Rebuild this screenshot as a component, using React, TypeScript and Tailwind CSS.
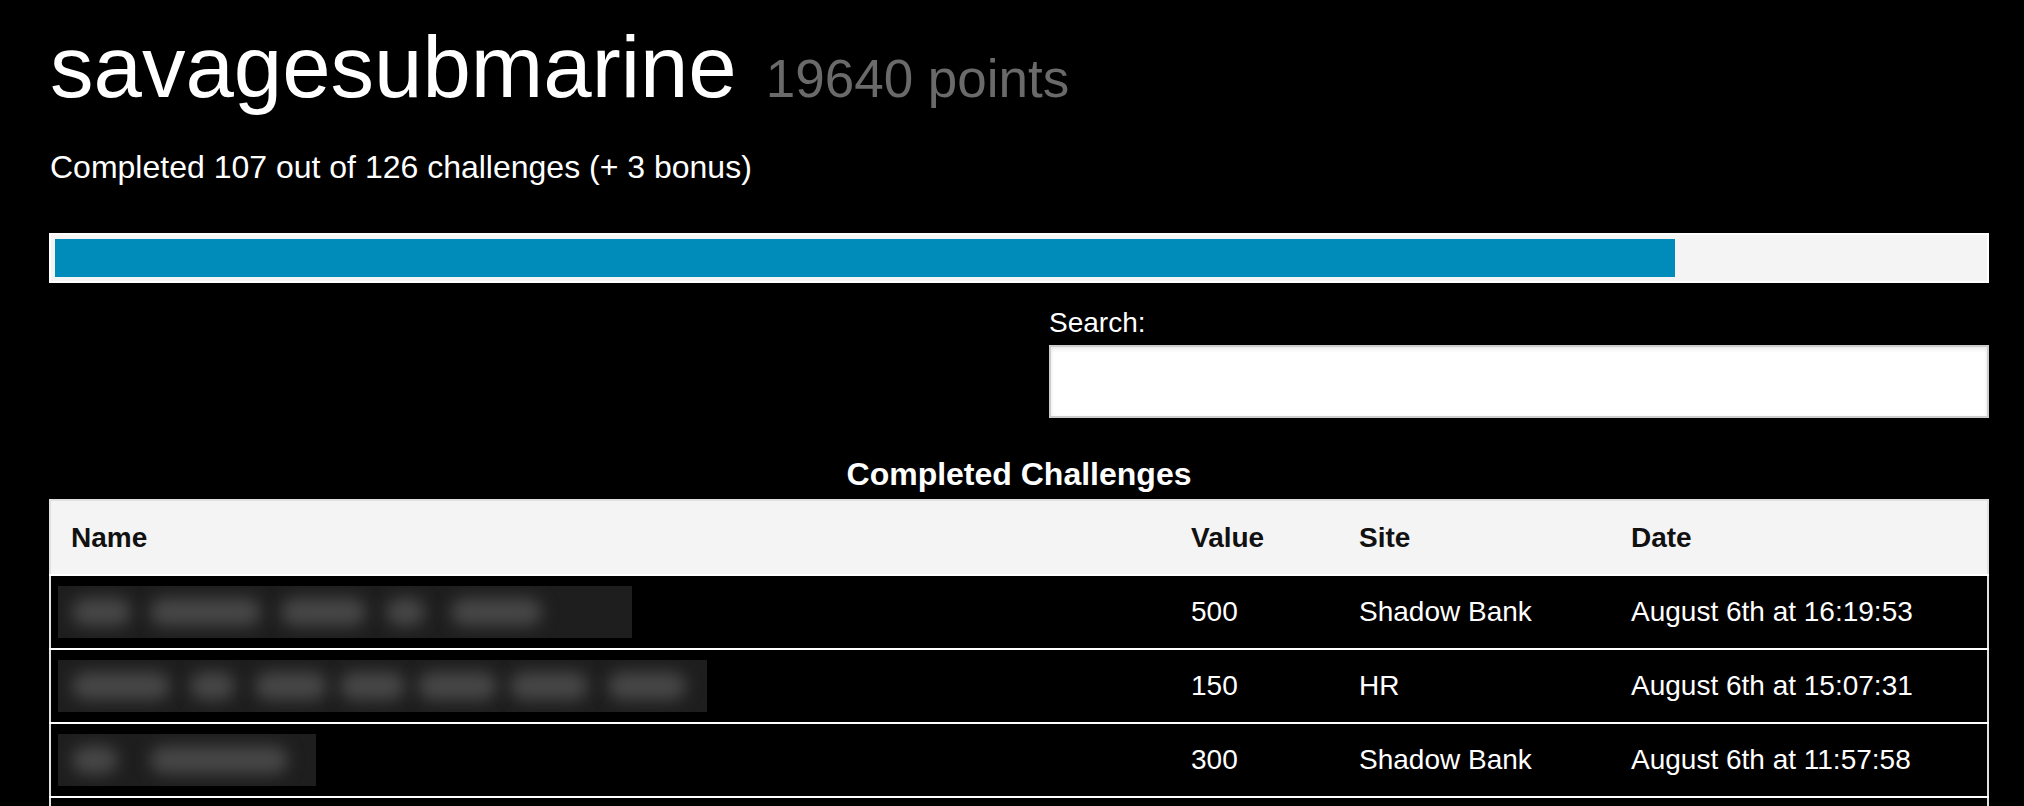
import React from 'react';

type Row = {
  blurWidth: number;
  blobs: [number, number][];
  value: string;
  site: string;
  date: string;
};

const ROWS: Row[] = [
  {
    blurWidth: 574,
    blobs: [[14, 73], [92, 203], [223, 308], [328, 367], [393, 484]],
    value: '500',
    site: 'Shadow Bank',
    date: 'August 6th at 16:19:53',
  },
  {
    blurWidth: 649,
    blobs: [[14, 112], [132, 177], [197, 269], [282, 347], [360, 439], [452, 530], [550, 628]],
    value: '150',
    site: 'HR',
    date: 'August 6th at 15:07:31',
  },
  {
    blurWidth: 258,
    blobs: [[14, 60], [92, 230]],
    value: '300',
    site: 'Shadow Bank',
    date: 'August 6th at 11:57:58',
  },
];

// redacted challenge name, drawn as a blurred strip
const Redacted: React.FC<{ width: number; blobs: [number, number][] }> = ({ width, blobs }) => (
  <div className="relative h-[52px] bg-[#1e1e1e] overflow-hidden" style={{ width }}>
    {blobs.map(([a, b], i) => (
      <div
        key={i}
        className="absolute top-[12px] h-[28px] rounded-full bg-[#474747] blur-[8px]"
        style={{ left: a, width: b - a }}
      />
    ))}
  </div>
);

const App: React.FC = () => {
  return (
    <div className="bg-black min-h-screen h-[806px] overflow-hidden font-['Liberation_Sans',Arial,sans-serif] text-white">
      <div className="ml-[49px] w-[1940px] pt-[23px] flex flex-col">
        {/* Header */}
        <h1 className="flex items-baseline leading-none">
          <span className="text-[87px] ml-[1px]">savagesubmarine</span>
          <span className="text-[53px] text-[#6a6a6a] ml-[29px]">19640 points</span>
        </h1>

        <p className="mt-[41px] text-[32px] leading-none ml-[1px]">
          Completed 107 out of 126 challenges (+ 3 bonus)
        </p>

        {/* Progress */}
        <div className="mt-[50px] h-[50px] border-2 border-white bg-[#f4f4f4] p-[4px]">
          <div className="h-[38px] w-[84%] bg-[#008cba]" />
        </div>

        {/* Search */}
        <div className="flex justify-end">
          <div className="w-[940px] flex flex-col">
            <label className="mt-[26px] text-[28px] leading-none">Search:</label>
            <input
              type="text"
              className="mt-[8px] h-[73px] w-full bg-white border-2 border-[#cccccc] shadow-[inset_0_2px_4px_rgba(0,0,0,0.1)] outline-none px-4 text-[28px] text-black"
            />
          </div>
        </div>

        {/* Table */}
        <h2 className="mt-[40px] text-[32px] leading-none font-bold text-center">Completed Challenges</h2>
        <table className="mt-[9px] w-full table-fixed border-collapse border-2 border-[#e0e0e0] text-[28px]">
          <colgroup>
            <col className="w-[1121px]" />
            <col className="w-[168px]" />
            <col className="w-[272px]" />
            <col />
          </colgroup>
          <thead className="bg-[#f4f4f4] text-[#111]">
            <tr className="h-[75px]">
              <th className="text-left font-bold px-[20px]">Name</th>
              <th className="text-left font-bold px-[20px]">Value</th>
              <th className="text-left font-bold px-[20px]">Site</th>
              <th className="text-left font-bold px-[20px]">Date</th>
            </tr>
          </thead>
          <tbody>
            {ROWS.map((r, i) => (
              <tr key={i} className="h-[74px] border-t-2 border-white">
                <td className="pl-[7px]">
                  <Redacted width={r.blurWidth} blobs={r.blobs} />
                </td>
                <td className="px-[20px]">{r.value}</td>
                <td className="px-[20px] whitespace-nowrap">{r.site}</td>
                <td className="px-[20px] whitespace-nowrap">{r.date}</td>
              </tr>
            ))}
            <tr className="h-[74px] border-t-2 border-white">
              <td />
              <td />
              <td />
              <td />
            </tr>
          </tbody>
        </table>
      </div>
    </div>
  );
};

export default App;
